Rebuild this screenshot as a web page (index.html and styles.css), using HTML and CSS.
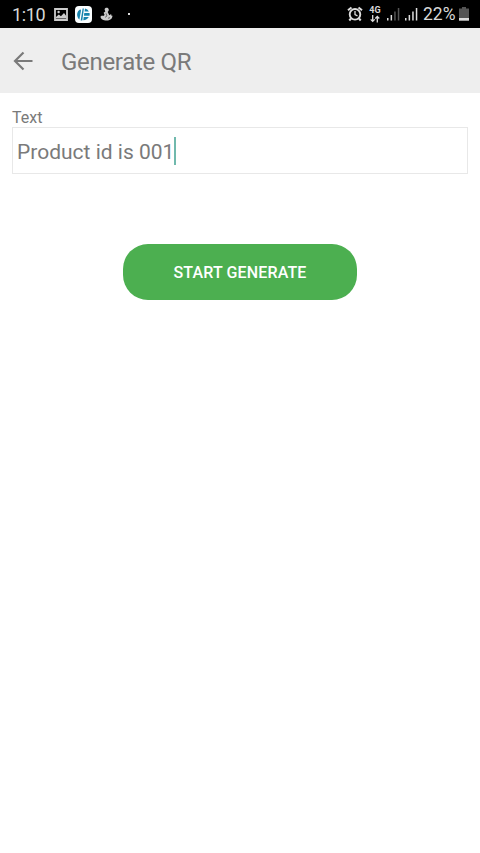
FILE: index.html
```html
<!DOCTYPE html>
<html lang="en">
<head>
<meta charset="utf-8">
<title>Generate QR</title>
<link rel="stylesheet" href="styles.css">
</head>
<body>
<div class="status">
  <span class="time">1:10</span>
  <svg class="photo" width="14" height="13" viewBox="0 0 14 13"><path d="M1 1h12v11H1z" fill="none" stroke="#ccc" stroke-width="1.8"/><path d="M2 10.500V9l2.800-2.500 2.100 1.700L10 4.900l2.400 3.300v2.300z" fill="#ccc"/><circle cx="4.600" cy="4" r="1.200" fill="#ccc"/></svg>
  <svg class="app" width="17" height="17" viewBox="0 0 17 17"><rect width="17" height="17" rx="4" fill="#fafdfe"/><path d="M5.400 3.200C1.400 5.200 1 10.700 4.400 13.500L6 4.600z" fill="#1683ad"/><path d="M7.600 2.600h1.300L7.300 14.600H5.700z" fill="#1683ad"/><path d="M10 2.500q2.600.5 3.900 3H9.600zM9.300 7h5.200q.4 1.400 0 2.700H8.900zM8.700 11h5.100q-1.700 3.100-5.500 3.300z" fill="#1683ad"/></svg>
  <svg class="figure" width="13" height="14" viewBox="0 0 13 14"><path d="M4.600 2.500C4.600.2 8.800.1 8.800 2.800c0 1-.6 1.600-1.100 2.300L9.300 8.300l1.900-1.200v1.300l1.300.4C12.300 12 10 13.500 6.600 13.500 3.300 13.500.6 12.200.5 9.400l1.500-1 1.200.7L4.600 8l-1-2.200 1.700-1.200z" fill="#ccc"/><path d="m6 6.300 1 2.700-2 1.400M8 11.300l2-.7" fill="none" stroke="#333" stroke-width=".6"/></svg>
  <span class="dot"></span>
  <span class="spacer"></span>
  <svg class="alarm" width="16" height="16" viewBox="0 0 16 16" fill="none" stroke="#ddd"><circle cx="8" cy="8.300" r="5.300" stroke-width="1.900"/><path d="M1 4.300 4.500 1.400M15 4.300l-3.500-2.900M4 12.500l-1.700 2M12 12.500l1.700 2" stroke-width="2"/><path d="M8 5v3.700l2.500 1.200" stroke-width="1.300"/></svg>
  <span class="network"><span class="generation">4G</span><svg width="10" height="8" viewBox="0 0 10 8" fill="none" stroke="#ddd" stroke-width="1.300"><path d="M2.700 0v6M.7 4.400l2 2 2-2M7.300 7.500v-6m-2 2 2-2 2 2"/></svg></span>
  <svg class="signal" width="13" height="14" viewBox="0 0 13 14"><path d="M0 11h1.500v2.500H0zM3.600 8h1.500v5.500H3.600z" fill="#ddd"/><path d="M7.200 4.500h1.500v9H7.200zM10.800 1h1.500v12.500h-1.500z" fill="#555"/></svg>
  <svg class="signal second" width="13" height="14" viewBox="0 0 13 14"><path d="M0 11h1.500v2.500H0zM3.600 8h1.500v5.500H3.600zM7.200 4.500h1.500v9H7.200zM10.800 1h1.500v12.500h-1.500z" fill="#ddd"/></svg>
  <span class="percent">22%</span>
  <svg class="battery" width="10" height="14" viewBox="0 0 10 14"><path d="M3 0h4v1.500h3V11H0V1.500h3z" fill="#555"/><path d="M0 11h10v2.700H0z" fill="#ddd"/></svg>
</div>
<header class="toolbar">
  <svg class="back" width="20" height="20" viewBox="0 0 20 20" fill="none" stroke="#7a7a7a" stroke-width="2.200"><path d="M19.500 10H2.500M10.500 1.500 2 10l8.500 8.500"/></svg>
  <h1 class="title">Generate QR</h1>
</header>
<main class="content">
  <div class="label">Text</div>
  <div class="field"><span class="value">Product id is 001</span><span class="caret"></span></div>
  <button class="generate">START GENERATE</button>
</main>
</body>
</html>
```
FILE: styles.css
```css
* { box-sizing: border-box; }
body {
  margin: 0;
  min-height: 853px;
  background: #fff;
  color: #7a7a7a;
  font-family: Roboto, sans-serif;
}
svg { display: block; flex: none; }
.status {
  display: flex;
  align-items: center;
  height: 28px;
  padding: 0 11px 0 12px;
  background: #000;
  color: #d8d8d8;
}
.time { width: 42px; padding-top: 1px; font-size: 18px; line-height: 29px; letter-spacing: -.4px; white-space: nowrap; }
.app { margin-left: 7px; }
.figure { margin-left: 8px; }
.dot { width: 2px; height: 2px; margin-left: 15px; background: #ddd; }
.spacer { flex: 1; }
.network {
  display: flex;
  flex-direction: column;
  align-items: center;
  width: 12px;
  margin-left: 6px;
}
.generation { font-size: 9px; font-weight: 700; line-height: 9px; }
.signal { margin-left: 6px; }
.second { margin-left: 5px; }
.percent { width: 33px; margin-left: 5px; padding-top: 1px; font-size: 17.5px; line-height: 29px; }
.battery { margin-left: 3px; }
.toolbar {
  display: flex;
  align-items: center;
  height: 65px;
  padding-left: 13px;
  background: #eee;
}
.title { margin: 2px 0 0 28px; font-size: 24px; font-weight: 400; line-height: 30px; letter-spacing: -.3px; }
.content { display: flex; flex-direction: column; padding: 15px 12px; }
.label { height: 19px; font-size: 16px; line-height: 19px; }
.field {
  display: flex;
  align-items: center;
  height: 47px;
  padding: 1px 0 0 4px;
  border: 1px solid #e8e8e8;
}
.value { padding-top: 2px; font-size: 21px; line-height: 28px; white-space: nowrap; }
.caret { width: 2px; height: 28px; background: #70b9ad; }
.generate {
  align-self: center;
  width: 234px;
  height: 56px;
  margin-top: 70px;
  padding: 0;
  border: 0;
  border-radius: 25px;
  background: #4caf50;
  color: #fff;
  font: 500 16px Roboto, sans-serif;
  letter-spacing: .15px;
}
```
